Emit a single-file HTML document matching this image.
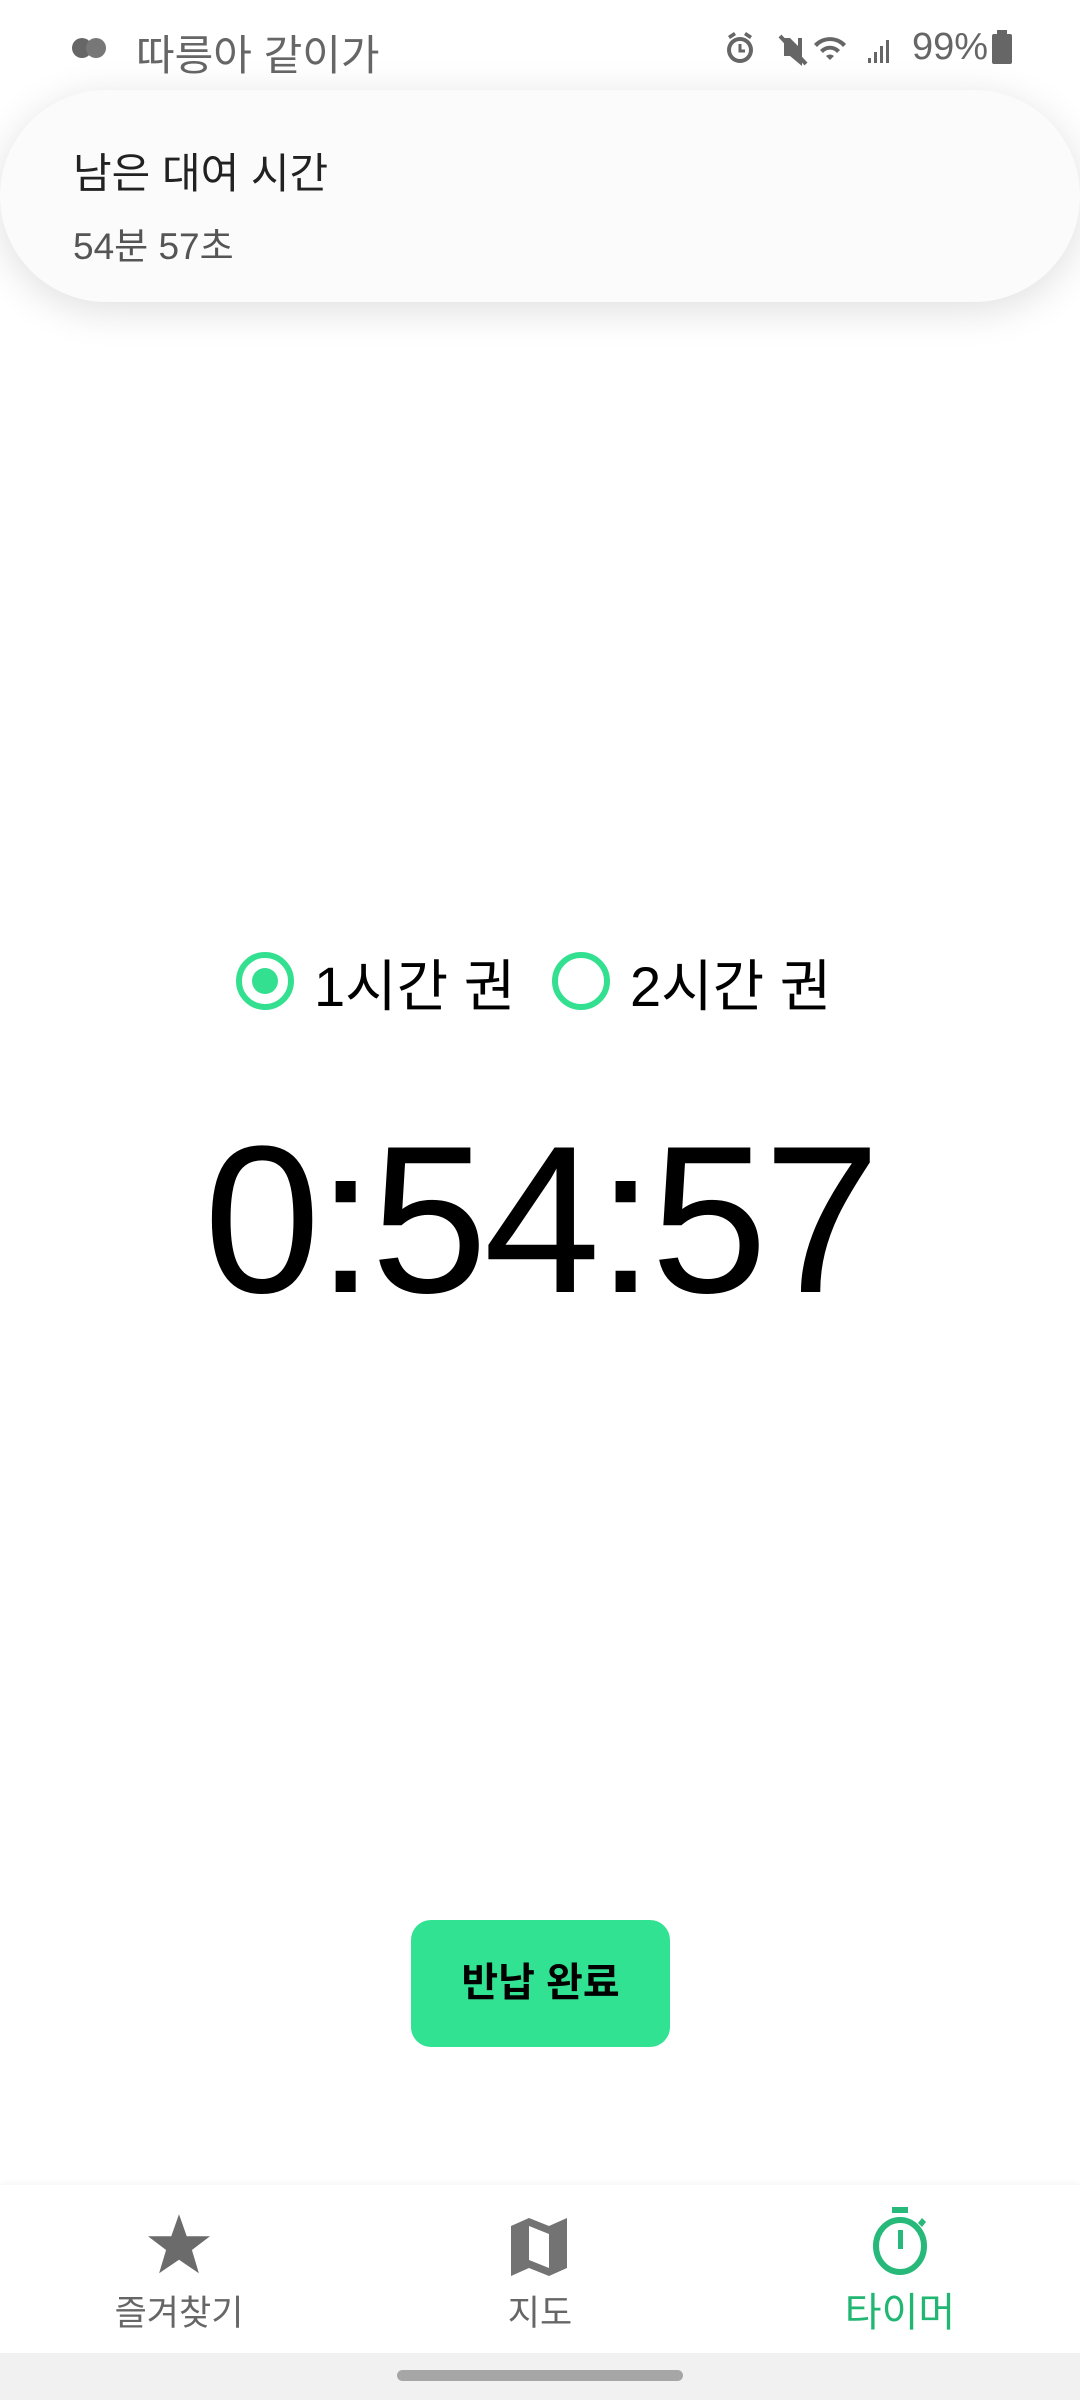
<!DOCTYPE html>
<html><head><meta charset="utf-8"><style>
*{margin:0;padding:0;box-sizing:border-box}
body{width:1080px;height:2400px;position:relative;background:#fff;font-family:"Liberation Sans","Noto Sans CJK KR",sans-serif;overflow:hidden}
.abs{position:absolute}
.card{left:0;top:90px;width:1080px;height:212px;background:#fbfbfb;border-radius:106px;box-shadow:0 8px 40px rgba(0,0,0,0.13)}
.radio{width:58px;height:58px;border:6px solid #33e090;border-radius:50%}
.nav{left:0;top:2185px;width:1080px;height:168px;background:#fff;box-shadow:0 -2px 6px rgba(0,0,0,0.04)}
.lbl{font-size:35px;color:#666;text-align:center;width:300px}
</style></head><body>
<div class="abs" style="left:72px;top:38px;width:20px;height:20px;border-radius:50%;background:#666"></div>
<div class="abs" style="left:86px;top:38px;width:20px;height:20px;border-radius:50%;background:#777"></div>
<div class="abs" style="left:136px;top:22px;font-size:42px;color:#666">따릉아 같이가</div>
<svg class="abs" style="left:722px;top:30px" width="190" height="36" viewBox="0 0 190 36">
<g fill="#666"><circle cx="18" cy="20" r="13"/><path d="M6 6l6-4 2 3-6 4zM30 6l-6-4-2 3 6 4z"/><path d="M62 8l6 0 8 8v-8h4v28l-12-10h-6z"/><path d="M92 14a22 22 0 0 1 32 0l-3 3a17 17 0 0 0-26 0zM98 20a14 14 0 0 1 20 0l-3 3a9 9 0 0 0-14 0zM104 26a6 6 0 0 1 8 0l-4 4z"/><rect x="146" y="28" width="3" height="5"/><rect x="152" y="22" width="3" height="11"/><rect x="158" y="16" width="3" height="17"/><rect x="164" y="10" width="3" height="23"/></g>
<circle cx="18" cy="20" r="9" fill="#fff"/><path d="M18 14v7h5" stroke="#666" stroke-width="3" fill="none"/>
<path d="M58 6l26 28" stroke="#666" stroke-width="4"/>
</svg>
<div class="abs" style="left:912px;top:26px;font-size:38px;color:#666">99%</div>
<div class="abs" style="left:992px;top:34px;width:20px;height:30px;background:#666;border-radius:2px"></div>
<div class="abs" style="left:997px;top:30px;width:10px;height:5px;background:#666"></div>

<div class="abs card"></div>
<div class="abs" style="left:73px;top:140px;font-size:42px;color:#222">남은 대여 시간</div>
<div class="abs" style="left:73px;top:216px;font-size:37px;color:#555">54분 57초</div>

<div class="abs radio" style="left:236px;top:952px"></div>
<div class="abs" style="left:252px;top:968px;width:26px;height:26px;border-radius:50%;background:#33e090"></div>
<div class="abs" style="left:314px;top:942px;font-size:56px;color:#000">1시간 권</div>
<div class="abs radio" style="left:552px;top:952px"></div>
<div class="abs" style="left:630px;top:942px;font-size:56px;color:#000">2시간 권</div>

<div class="abs" style="left:0;width:1080px;text-align:center;top:1115px;font-size:210px;letter-spacing:-4px;color:#000;line-height:1">0:54:57</div>

<div class="abs" style="left:411px;top:1920px;width:259px;height:127px;background:#30e291;border-radius:20px;font-size:40px;font-weight:bold;color:#000;text-align:center;line-height:127px">반납 완료</div>

<div class="abs nav"></div>
<svg class="abs" style="left:148px;top:2214px" width="62" height="60" viewBox="0 0 24 23"><path fill="#6b6b6b" d="M12 0l3 8.5h9l-7 5.3 2.7 9L12 17.6 4.3 22.8 7 13.8 0 8.5h9z"/></svg>
<svg class="abs" style="left:511px;top:2218px" width="56" height="58" viewBox="0 0 56 58"><path fill="#737373" d="M0 8l18-8 20 8 18-8v50l-18 8-20-8-18 8z"/><path fill="#fff" d="M18 8l20 8v34l-20-8z"/></svg>
<svg class="abs" style="left:870px;top:2207px" width="60" height="70" viewBox="0 0 60 70"><rect x="22" y="0" width="16" height="6" fill="#26b97a"/><ellipse cx="30" cy="39" rx="24" ry="26" fill="none" stroke="#26b97a" stroke-width="6"/><rect x="28" y="23" width="5" height="19" fill="#26b97a"/><path d="M48 16l4-5 4 4-4 5z" fill="#26b97a"/></svg>
<div class="abs lbl" style="left:29px;top:2285px">즐겨찾기</div>
<div class="abs lbl" style="left:390px;top:2285px">지도</div>
<div class="abs lbl" style="left:750px;top:2280px;color:#22b673;font-size:40px">타이머</div>
<div class="abs" style="left:0;top:2353px;width:1080px;height:47px;background:#f1f1f1"></div>
<div class="abs" style="left:397px;top:2370px;width:286px;height:11px;border-radius:6px;background:#a6a6a6"></div>
</body></html>
